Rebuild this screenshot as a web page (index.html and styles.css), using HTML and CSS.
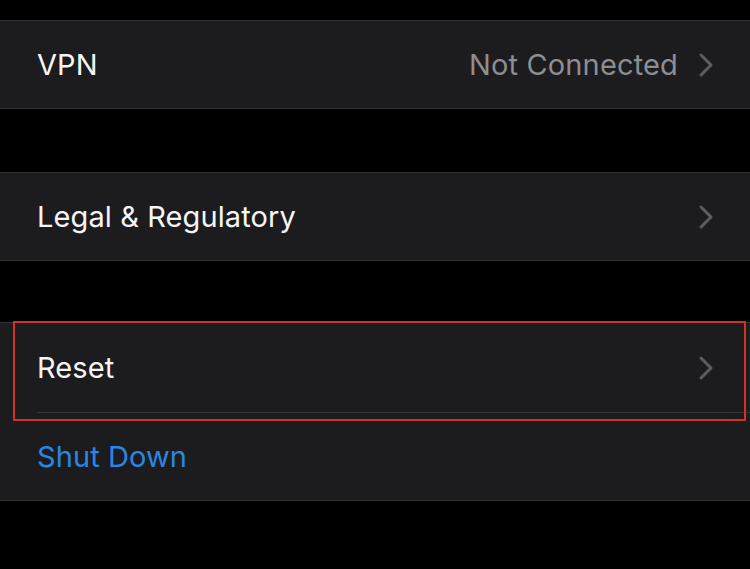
FILE: index.html
```html
<!DOCTYPE html>
<html>
<head>
<meta charset="utf-8">
<link rel="stylesheet" href="styles.css">
</head>
<body>
<div class="page">
  <div class="group g1">
    <div class="row">
      <span class="label">VPN</span>
      <span class="right"><span class="value">Not Connected</span>
        <svg class="chev" width="16" height="26" viewBox="0 0 16 26"><polyline points="3,3 13,13 3,23" fill="none" stroke="#5c5c60" stroke-width="3" stroke-linecap="round" stroke-linejoin="round"/></svg>
      </span>
    </div>
  </div>
  <div class="group g2">
    <div class="row">
      <span class="label">Legal &amp; Regulatory</span>
      <span class="right">
        <svg class="chev" width="16" height="26" viewBox="0 0 16 26"><polyline points="3,3 13,13 3,23" fill="none" stroke="#5c5c60" stroke-width="3" stroke-linecap="round" stroke-linejoin="round"/></svg>
      </span>
    </div>
  </div>
  <div class="group g3">
    <div class="row reset">
      <span class="label">Reset</span>
      <span class="right">
        <svg class="chev" width="16" height="26" viewBox="0 0 16 26"><polyline points="3,3 13,13 3,23" fill="none" stroke="#5c5c60" stroke-width="3" stroke-linecap="round" stroke-linejoin="round"/></svg>
      </span>
      <div class="highlight"></div>
    </div>
    <div class="sep"></div>
    <div class="row">
      <span class="label link">Shut Down</span>
    </div>
  </div>
</div>
</body>
</html>
```
FILE: styles.css
```css
html, body {
  margin: 0;
  padding: 0;
  background: #000;
}
.page {
  width: 750px;
  height: 569px;
  padding-top: 20px;
  box-sizing: border-box;
  font-family: Inter, "Liberation Sans", sans-serif;
  overflow: hidden;
}
.group {
  background: #1c1c1e;
  border-top: 1px solid #323234;
  border-bottom: 1px solid #323234;
}
.g2 { margin-top: 63px; }
.g3 { margin-top: 61px; }
.row {
  height: 87px;
  display: flex;
  align-items: center;
  justify-content: space-between;
  padding: 0 36px 0 37px;
  position: relative;
}
.reset { height: 89px; }
.label {
  color: #f5f5f7;
  font-size: 29px;
  letter-spacing: 0.1px;
}
.link { color: #2a86e2; }
.right {
  display: flex;
  align-items: center;
  gap: 20px;
}
.value {
  color: #8d8d92;
  font-size: 29px;
  letter-spacing: 0.15px;
}
.chev { display: block; }
.sep {
  height: 1px;
  background: #38383a;
  margin-left: 37px;
}
.highlight {
  position: absolute;
  left: 13px;
  top: -2px;
  width: 733px;
  height: 100px;
  box-sizing: border-box;
  border: 2px solid #cf3326;
}
```
